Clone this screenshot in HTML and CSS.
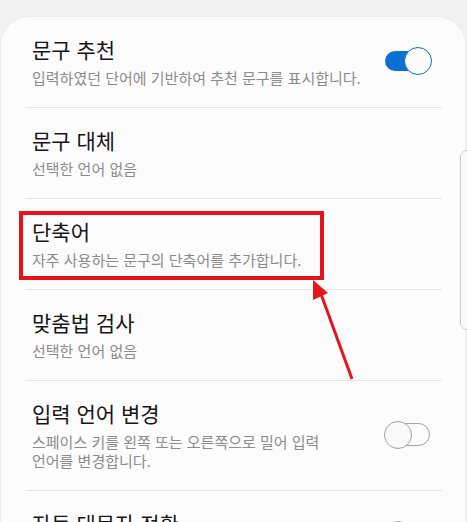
FILE: index.html
```html
<!DOCTYPE html>
<html lang="ko">
<head>
    <meta charset="UTF-8">
    <meta name="viewport" content="width=device-width, initial-scale=1.0">
    <title>키보드 설정</title>
    <link rel="stylesheet" href="styles.css">
</head>
<body>
    <div class="screen">
        <div class="card">
            <div class="row">
                <div class="text">
                    <div class="title">문구 추천</div>
                    <div class="desc">입력하였던 단어에 기반하여 추천 문구를 표시합니다.</div>
                </div>
                <span class="switch on"></span>
            </div>
            <div class="row">
                <div class="text">
                    <div class="title">문구 대체</div>
                    <div class="desc">선택한 언어 없음</div>
                </div>
            </div>
            <div class="row marked">
                <div class="text">
                    <div class="title">단축어</div>
                    <div class="desc">자주 사용하는 문구의 단축어를 추가합니다.</div>
                </div>
                <!-- 빨간 표시 박스 -->
                <div class="highlight"></div>
            </div>
            <div class="row">
                <div class="text">
                    <div class="title">맞춤법 검사</div>
                    <div class="desc">선택한 언어 없음</div>
                </div>
            </div>
            <div class="row">
                <div class="text">
                    <div class="title">입력 언어 변경</div>
                    <div class="desc">스페이스 키를 왼쪽 또는 오른쪽으로 밀어 입력<br>언어를 변경합니다.</div>
                </div>
                <span class="switch"></span>
            </div>
            <div class="row">
                <div class="text">
                    <div class="title">자동 대문자 전환</div>
                    <div class="desc">문장의 첫 글자를 자동으로 대문자로 바꿉니다.</div>
                </div>
                <span class="switch"></span>
            </div>
        </div>

        <div class="scroll-handle"></div>

        <svg class="arrow" width="60" height="110" viewBox="300 275 60 110">
            <line x1="321" y1="294" x2="352" y2="379" stroke="#e8141b" stroke-width="3"/>
            <polygon points="313,280 313,300 328,293" fill="#e8141b"/>
        </svg>
    </div>
</body>
</html>
```

FILE: styles.css
```css
body {
    margin: 0;
    background-color: #f1f1f1;
    font-family: "Noto Sans CJK KR", "Noto Sans", sans-serif;
}

.screen {
    position: relative;
    height: 522px;
    overflow: hidden;
}

.card {
    margin: 17px 2px 0 1px;
    background-color: #fcfcfc;
    border-radius: 28px 28px 0 0;
    box-shadow: 0 0 0 1px #ececec;
    min-height: 600px;
}

.row {
    display: flex;
    align-items: center;
    margin: 0 23px 0 25px;
    padding: 18px 10px 20px 6px;
    border-bottom: 1px solid #e4e4e4;
}

.marked {
    position: relative;
}

.text {
    flex: 1;
}

.title {
    font-size: 21px;
    line-height: 28px;
    color: #161616;
}

.desc {
    margin-top: 5px;
    font-size: 15px;
    line-height: 19px;
    color: #8b8b8b;
}

/* toggle */
.switch {
    position: relative;
    flex: none;
    width: 48px;
    height: 28px;
    margin-left: 12px;
}

.switch::before {
    content: "";
    position: absolute;
    top: 2px;
    left: 9px;
    width: 37px;
    height: 23px;
    border: 1.5px solid #a2a2a2;
    border-radius: 12px;
    box-sizing: border-box;
}

.switch::after {
    content: "";
    position: absolute;
    top: 0;
    left: 0;
    width: 28px;
    height: 28px;
    border: 1.5px solid #a2a2a2;
    border-radius: 50%;
    background-color: #f9f9f9;
    box-sizing: border-box;
}

.switch.on::before {
    top: 4px;
    left: 1px;
    width: 34px;
    height: 20px;
    border: none;
    background-color: #0b6fd3;
}

.switch.on::after {
    left: 20px;
    border-color: #0b6fd3;
    background-color: #fdfdfd;
}

.highlight {
    position: absolute;
    left: -7px;
    top: 12px;
    width: 305px;
    height: 69px;
    border: 4px solid #e8121b;
    box-sizing: border-box;
}

.scroll-handle {
    position: absolute;
    left: 460px;
    top: 150px;
    width: 14px;
    height: 180px;
    border: 1px solid #cfcfcf;
    border-radius: 7px;
    background-color: #fafafa;
    box-sizing: border-box;
}

.arrow {
    position: absolute;
    left: 300px;
    top: 275px;
}
```
